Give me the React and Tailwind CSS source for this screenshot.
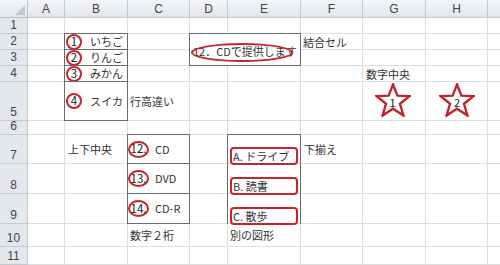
import React from "react";

const COLS = ["A", "B", "C", "D", "E", "F", "G", "H", ""];
const ROWS = [1, 2, 3, 4, 5, 6, 7, 8, 9, 10, 11];

function Circle({ n, wide }) {
  return (
    <span
      className={
        wide
          ? "flex items-center justify-center w-[21px] h-[17px] rounded-[50%] border-2 border-[#c3262c] text-[11.5px] leading-none shrink-0 bg-white text-[#222]"
          : "flex items-center justify-center w-4 h-4 rounded-full border-2 border-[#c3262c] text-[11.5px] leading-none shrink-0 bg-white text-[#222]"
      }
    >
      {n}
    </span>
  );
}

function Star({ n }) {
  return (
    <div className="relative w-[36px] h-[34px]">
      <svg viewBox="0 0 36 34" className="absolute inset-0 w-full h-full">
        <polygon
          points="18,1.5 22.4,12.6 34.5,13.1 25,20.8 28.4,32.5 18,25.8 7.6,32.5 11,20.8 1.5,13.1 13.6,12.6"
          fill="white"
          stroke="#bf252b"
          strokeWidth="2.4"
          strokeLinejoin="miter"
        />
      </svg>
      <span className="absolute inset-x-0 top-[14px] text-center text-[11px] leading-none text-[#222]">
        {n}
      </span>
    </div>
  );
}

export default function App() {
  return (
    <div className="w-[500px] h-[265px] overflow-hidden bg-white text-[#333] font-['Noto_Sans_CJK_JP','Liberation_Sans',sans-serif] text-[11px]">
      <div className="grid grid-cols-[28px_37px_63px_62px_38px_73px_62px_63px_62px_60px] grid-rows-[18px_16px_16px_16px_16px_39px_14px_29px_30px_30px_23px_18px]">
        {/* corner */}
        <div className="col-start-1 row-start-1 relative bg-linear-to-b from-[#f3f5f8] to-[#e2e6eb] border-r border-b border-[#b9c0c8]">
          <svg className="absolute right-[2px] bottom-[2px]" width="10" height="10" viewBox="0 0 10 10">
            <polygon points="10,0 10,10 0,10" fill="#c4c9cf" />
          </svg>
        </div>
        {/* column headers */}
        {COLS.map((c, i) => (
          <div
            key={"h" + i}
            style={{ gridColumn: i + 2, gridRow: 1 }}
            className="flex items-center justify-center bg-linear-to-b from-[#f3f5f8] to-[#e2e6eb] border-r border-b border-[#c3c9d0] font-['Liberation_Sans',sans-serif] text-[12px] text-[#444]"
          >
            {c}
          </div>
        ))}
        {/* row headers */}
        {ROWS.map((r, i) => (
          <div
            key={r}
            style={{ gridColumn: 1, gridRow: i + 2 }}
            className="flex items-end justify-center pb-[1px] bg-[#e4e7ec] border-r border-b border-[#c3c9d0] font-['Liberation_Sans',sans-serif] text-[12px] leading-[14px] text-[#444]"
          >
            {r}
          </div>
        ))}
        {/* gridlines */}
        {ROWS.map((r, ri) =>
          COLS.map((c, ci) => (
            <div
              key={"g" + ci + "-" + r}
              style={{ gridColumn: ci + 2, gridRow: ri + 2 }}
              className="border-r border-b border-[#dcdee1]"
            />
          ))
        )}

        {/* B2:B5 */}
        <div className="col-start-3 row-start-3 -ml-px -mt-px border border-[#6a6a6a] flex items-center gap-2 pl-[1px]">
          <Circle n="1" />
          <span>いちご</span>
        </div>
        <div className="col-start-3 row-start-4 -ml-px -mt-px border border-[#6a6a6a] flex items-center gap-2 pl-[1px]">
          <Circle n="2" />
          <span>りんご</span>
        </div>
        <div className="col-start-3 row-start-5 -ml-px -mt-px border border-[#6a6a6a] flex items-center gap-2 pl-[1px]">
          <Circle n="3" />
          <span>みかん</span>
        </div>
        <div className="col-start-3 row-start-6 -ml-px -mt-px border border-[#6a6a6a] flex items-center gap-2 pl-[1px]">
          <Circle n="4" />
          <span>スイカ</span>
        </div>
        <div className="col-start-4 row-start-6 flex items-center pl-[2px]">行高違い</div>

        {/* D2:E3 merged */}
        <div className="col-start-5 col-span-2 row-start-3 row-span-2 -ml-px -mt-px border border-[#6a6a6a] bg-white relative flex items-center pl-[3px] pt-[4px]">
          <span className="whitespace-nowrap">12．CDで提供します</span>
          <span className="absolute left-[1px] top-[9px] w-[102px] h-[19px] rounded-[50%] border-2 border-[#c3262c]" />
        </div>
        <div className="col-start-7 row-start-3 flex items-center pl-[2px]">結合セル</div>

        {/* G4, stars */}
        <div className="col-start-8 row-start-5 flex items-center pl-[3px]">数字中央</div>
        <div className="col-start-8 row-start-6 flex justify-center items-start pt-[1px] pr-[4px]">
          <Star n="1" />
        </div>
        <div className="col-start-9 row-start-6 flex justify-center items-start pt-[1px]">
          <Star n="2" />
        </div>

        {/* B7 */}
        <div className="col-start-3 row-start-8 flex items-center pl-[3px]">上下中央</div>

        {/* C7:C9 */}
        <div className="col-start-4 row-start-8 -ml-px -mt-px border border-[#6a6a6a] flex items-center gap-[6px]">
          <Circle n="12." wide />
          <span>CD</span>
        </div>
        <div className="col-start-4 row-start-9 -ml-px -mt-px border border-[#6a6a6a] flex items-center gap-[6px]">
          <Circle n="13." wide />
          <span>DVD</span>
        </div>
        <div className="col-start-4 row-start-10 -ml-px -mt-px border border-[#6a6a6a] flex items-center gap-[6px]">
          <Circle n="14." wide />
          <span>CD-R</span>
        </div>
        <div className="col-start-4 row-start-11 flex items-center pl-[2px]">数字２桁</div>

        {/* E7:E9 */}
        <div className="col-start-6 row-start-8 row-span-3 -ml-px -mt-px border-l border-t border-r border-[#6a6a6a]" />
        <div className="col-start-6 row-start-8 flex items-end pl-[2px]">
          <div className="w-[68px] h-[18px] -mb-px rounded-[4px] border-2 border-[#c3262c] bg-white flex items-center pl-[1px] whitespace-nowrap">
            A. ドライブ
          </div>
        </div>
        <div className="col-start-6 row-start-9 flex items-end pl-[2px]">
          <div className="w-[68px] h-[18px] -mb-px rounded-[4px] border-2 border-[#c3262c] bg-white flex items-center pl-[1px] whitespace-nowrap">
            B. 読書
          </div>
        </div>
        <div className="col-start-6 row-start-10 flex items-end pl-[2px]">
          <div className="w-[68px] h-[18px] -mb-px rounded-[4px] border-2 border-[#c3262c] bg-white flex items-center pl-[1px] whitespace-nowrap">
            C. 散歩
          </div>
        </div>
        <div className="col-start-6 row-start-11 flex items-center pl-[2px]">別の図形</div>
        <div className="col-start-7 row-start-8 flex items-center pl-[3px]">下揃え</div>
      </div>
    </div>
  );
}
